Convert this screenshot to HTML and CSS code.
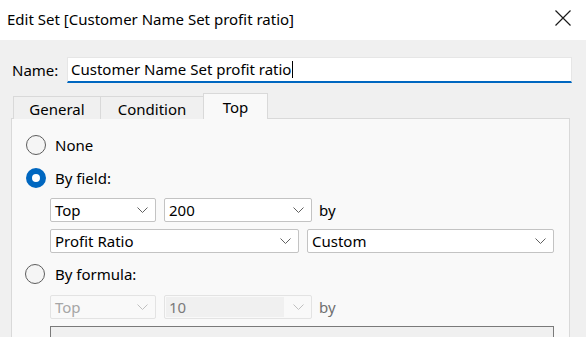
FILE: index.html
```html
<!DOCTYPE html>
<html>
<head>
<meta charset="utf-8">
<link rel="stylesheet" href="styles.css">
</head>
<body>
<div class="titlebar">
  <span class="title">Edit Set [Customer Name Set profit ratio]</span>
  <svg class="close" width="16" height="16" viewBox="0 0 16 16"><path d="M0.5 0.5 L15.5 15.5 M15.5 0.5 L0.5 15.5" stroke="#1a1a1a" stroke-width="1.2" fill="none"/></svg>
</div>
<div class="content">
  <div class="name-row">
    <span class="name-label">Name:</span>
    <div class="name-input">Customer Name Set profit ratio<span class="caret"></span></div>
  </div>
  <div class="tabs">
    <div class="tab tab-general">General</div>
    <div class="tab tab-condition">Condition</div>
    <div class="tab tab-top active">Top</div>
  </div>
  <div class="panel">
    <div class="radio-row row-none"><span class="radio"></span><span>None</span></div>
    <div class="radio-row row-field"><span class="radio checked"></span><span>By field:</span></div>
    <div class="sel-row row-a">
      <div class="select w-dir"><span>Top</span><svg class="chev" width="11" height="6" viewBox="0 0 11 6"><path d="M0.5 0.5 L5.5 5.5 L10.5 0.5" stroke="#606060" fill="none"/></svg></div>
      <div class="select w-num"><span>200</span><svg class="chev" width="11" height="6" viewBox="0 0 11 6"><path d="M0.5 0.5 L5.5 5.5 L10.5 0.5" stroke="#606060" fill="none"/></svg></div>
      <span class="by">by</span>
    </div>
    <div class="sel-row row-b">
      <div class="select w-field"><span>Profit Ratio</span><svg class="chev" width="11" height="6" viewBox="0 0 11 6"><path d="M0.5 0.5 L5.5 5.5 L10.5 0.5" stroke="#606060" fill="none"/></svg></div>
      <div class="select w-custom"><span>Custom</span><svg class="chev" width="11" height="6" viewBox="0 0 11 6"><path d="M0.5 0.5 L5.5 5.5 L10.5 0.5" stroke="#606060" fill="none"/></svg></div>
    </div>
    <div class="radio-row row-formula"><span class="radio"></span><span>By formula:</span></div>
    <div class="sel-row row-c disabled">
      <div class="select w-dir"><span>Top</span><svg class="chev" width="11" height="6" viewBox="0 0 11 6"><path d="M0.5 0.5 L5.5 5.5 L10.5 0.5" stroke="#c0c0c0" fill="none"/></svg></div>
      <div class="select w-num"><span class="num-field">10</span><svg class="chev" width="11" height="6" viewBox="0 0 11 6"><path d="M0.5 0.5 L5.5 5.5 L10.5 0.5" stroke="#c0c0c0" fill="none"/></svg></div>
      <span class="by">by</span>
    </div>
    <div class="formula-box"></div>
  </div>
</div>
</body>
</html>
```
FILE: styles.css
```css
html, body {
  margin: 0;
  padding: 0;
  height: 100%;
  overflow: hidden;
}
body {
  background: #f0f0f0;
  font-family: "Noto Sans", "Open Sans", sans-serif;
  color: #000;
  font-size: 15px;
}
.titlebar {
  height: 40px;
  background: #ffffff;
  display: flex;
  align-items: center;
  justify-content: space-between;
  padding: 0 15px 0 7px;
}
.title {
  font-size: 15px;
  color: #000;
  margin-top: -3px;
}
.close {
  display: block;
  margin-top: -4px;
}
.content {
  padding: 17px 0 0 0;
  height: calc(100vh - 40px);
  box-sizing: border-box;
  overflow: hidden;
}
.name-row {
  display: flex;
  align-items: center;
  height: 26px;
}
.name-label {
  width: 55px;
  padding-left: 12px;
}
.name-input {
  width: 505px;
  height: 26px;
  box-sizing: border-box;
  background: #fff;
  border: 1px solid #e6e6e6;
  border-bottom: 2px solid #0067c0;
  padding-left: 3px;
  display: flex;
  align-items: center;
  line-height: 1;
}
.caret {
  display: inline-block;
  width: 1px;
  height: 17px;
  background: #000;
  margin-left: 1px;
}
.tabs {
  display: flex;
  align-items: flex-end;
  margin-top: 10px;
  padding-left: 13px;
  height: 26px;
  position: relative;
  z-index: 1;
  margin-bottom: -1px;
}
.tab {
  box-sizing: border-box;
  height: 23px;
  border: 1px solid #d9d9d9;
  border-bottom: none;
  background: #f0f0f0;
  display: flex;
  justify-content: center;
  align-items: center;
  padding-top: 2px;
}
.tab-general { width: 88px; }
.tab-condition { width: 103px; border-left: none; }
.tab-top { width: 65px; }
.tab.active {
  height: 26px;
  background: #f9f9f9;
  margin-left: -1px;
  padding-top: 0;
}
.panel {
  margin-left: 11px;
  width: 559px;
  box-sizing: border-box;
  height: 240px;
  background: #f9f9f9;
  border: 1px solid #d9d9d9;
  padding: 14px 0 0 14px;
}
.radio-row {
  display: flex;
  align-items: center;
  height: 24px;
}
.radio {
  width: 20px;
  height: 20px;
  box-sizing: border-box;
  border: 1px solid #5d5d5d;
  border-radius: 50%;
  background: #f5f5f5;
  margin-right: 9px;
}
.radio.checked {
  border: 6px solid #0067c0;
  background: #fff;
}
.row-field { margin-top: 9px; }
.sel-row {
  display: flex;
  align-items: center;
  padding-left: 24px;
  height: 24px;
}
.row-a { margin-top: 8px; }
.row-b { margin-top: 7px; }
.row-formula { margin-top: 9px; }
.row-formula .radio { margin-left: -1px; margin-right: 10px; }
.row-c { margin-top: 9px; }
.select {
  box-sizing: border-box;
  height: 24px;
  background: #fff;
  border: 1px solid #c3c3c3;
  border-radius: 2px;
  display: flex;
  align-items: center;
  justify-content: space-between;
  padding: 0 7px 0 4px;
}
.chev { display: block; }
.w-dir { width: 106px; }
.w-num { width: 148px; margin-left: 8px; }
.w-field { width: 249px; }
.w-custom { width: 247px; margin-left: 8px; }
.by { margin-left: 7px; }
.disabled .select {
  background: #f9f9f9;
  border-color: #e3e3e3;
  color: #a6a6a6;
}
.disabled .w-num {
  padding-left: 1px;
}
.num-field {
  background: #f0f0f0;
  color: #7a7a7a;
  width: 118px;
  height: 20px;
  display: flex;
  align-items: center;
  padding-left: 3px;
  box-sizing: border-box;
}
.disabled .by { color: #707070; }
.formula-box {
  margin-top: 7px;
  margin-left: 24px;
  width: 504px;
  height: 40px;
  box-sizing: border-box;
  background: #f0f0f0;
  border: 1px solid #7a7a7a;
}
```
